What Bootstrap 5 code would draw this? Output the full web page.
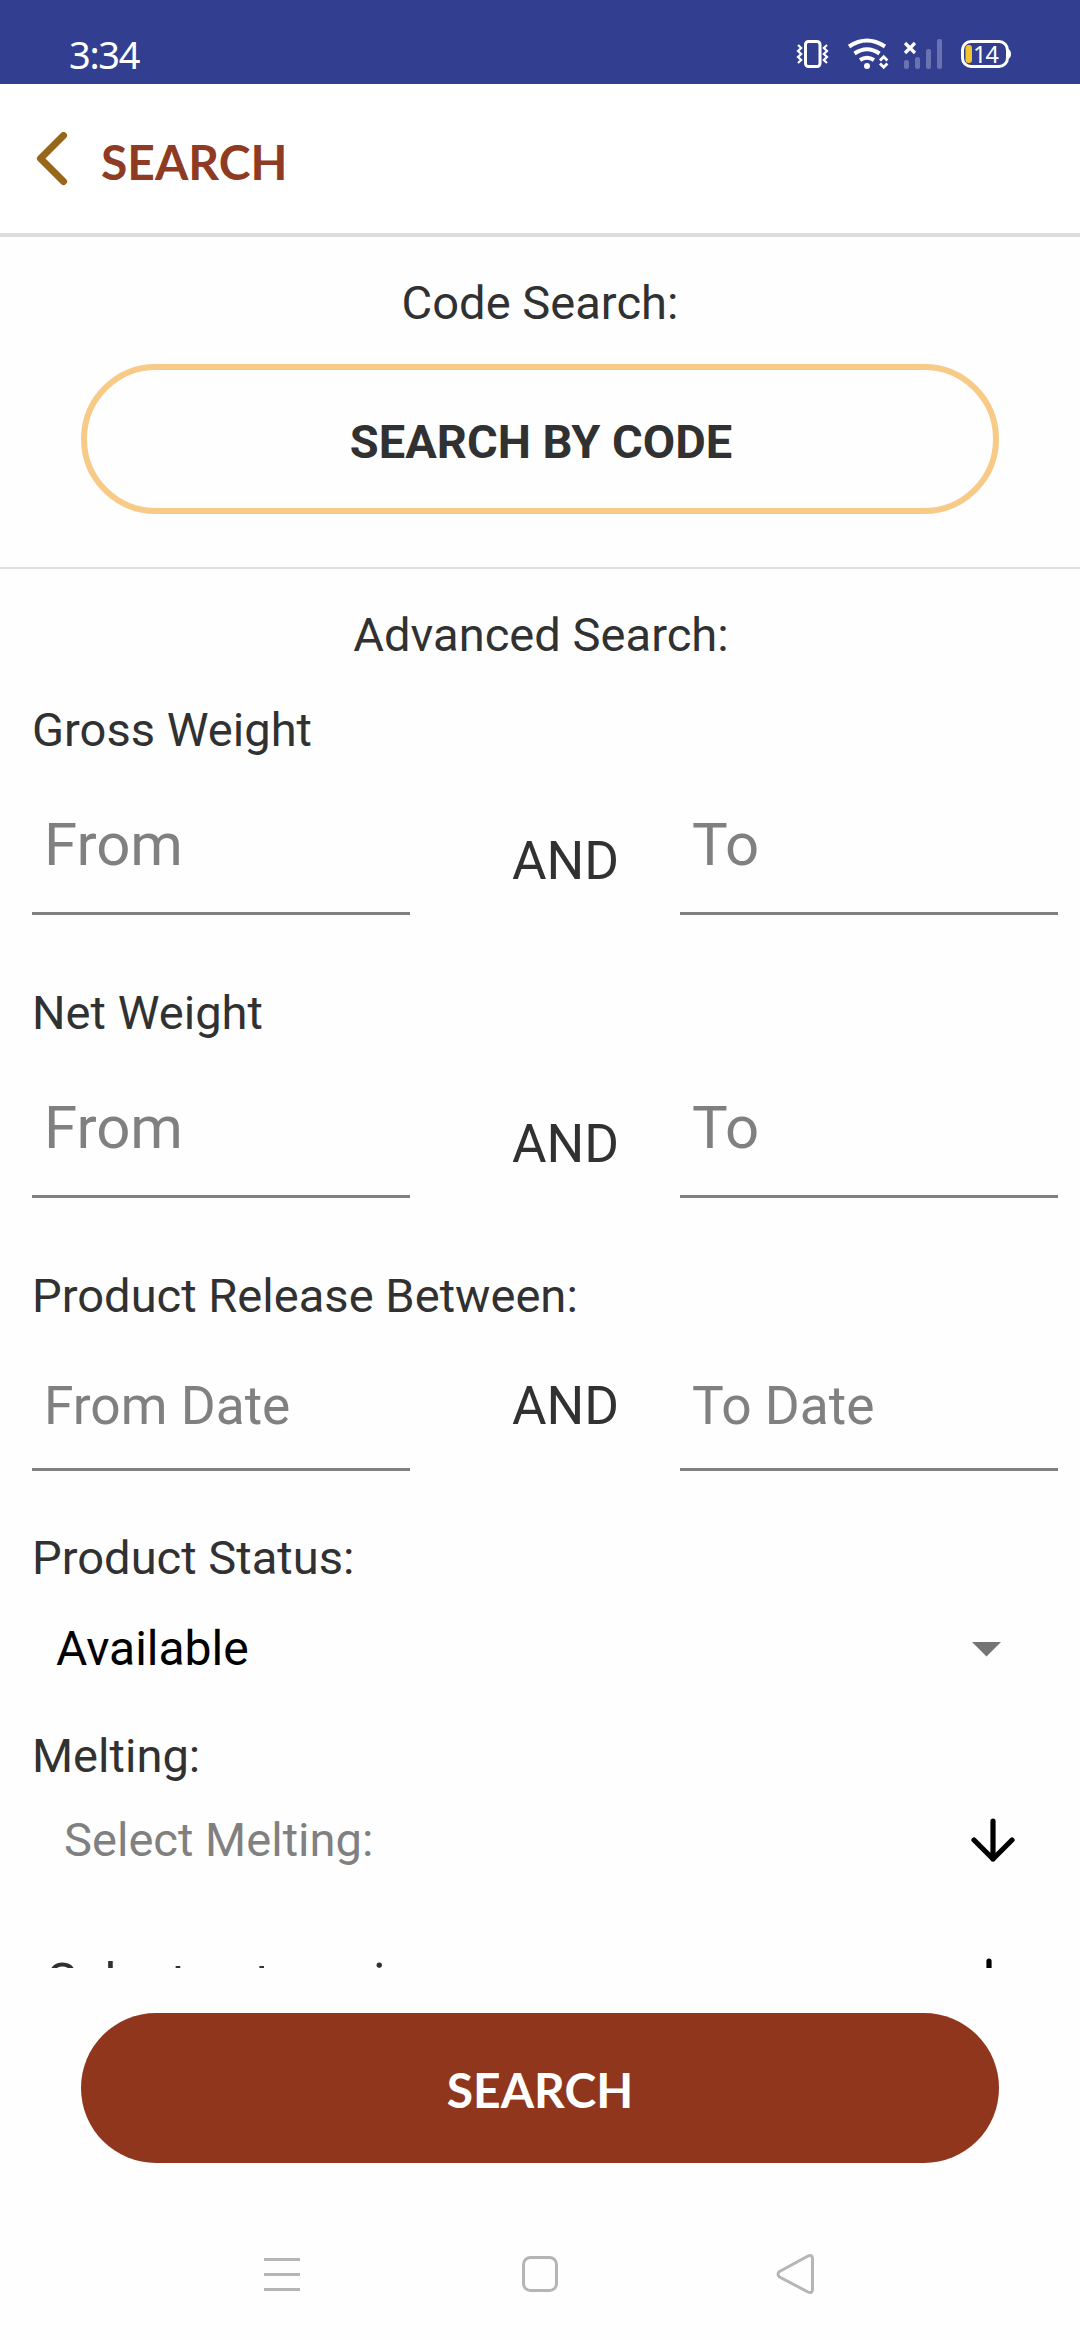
<!DOCTYPE html>
<html lang="en">
<head>
<meta charset="utf-8">
<meta name="viewport" content="width=device-width, initial-scale=1">
<title>Search</title>
<link href="https://cdn.jsdelivr.net/npm/bootstrap@5.3.0/dist/css/bootstrap.min.css" rel="stylesheet">
<style>
html,body{height:100%}
body{font-family:Roboto,"Noto Sans",sans-serif;color:#313131;background:#fefefe;font-size:47.1px;line-height:60px;overflow:hidden}
.screen{width:1080px;height:2340px}
.statusbar{height:84px;background:#323f90;color:#fff;padding-left:69px}
.clock{font:38px/84px "Noto Sans",sans-serif;padding-top:12px;letter-spacing:-1.300px}
.topbar{height:153px;border-bottom:4px solid #ddd;background:#fff;padding-left:36px}
.brand-title{font:bold 48px/60px Lato,sans-serif;color:#8f3a23;margin:7px 0 0 33px}
.code-area{padding:36px 81px 53px;border-bottom:2px solid #ddd}
.btn-pill{--bs-btn-border-radius:75px;height:150px;width:100%;padding:0}
.btn-code{--bs-btn-border-color:#f7cb87;--bs-btn-border-width:6px;--bs-btn-color:#313131;font-size:47px;font-weight:700;margin-top:31px;padding:7px 0 0 2px}
.btn-go{--bs-btn-bg:#90361d;--bs-btn-color:#fff;--bs-btn-border-width:0;font:bold 48px/60px Lato,sans-serif;padding-top:4px}
.form-area{padding:36px 22px 0 32px;min-height:0}
.range{height:155px}
.range-date{height:145px}
.field{width:378px;border-bottom:3px solid #808080;color:#808080;padding:0 0 37px 12px;font-size:60px}
.joiner{font-size:53px;padding:0 0 24px 41px}
.range-date .field{font-size:53.300px;padding-bottom:32px}
.range-date .joiner{padding-bottom:35px}
.gap-a{margin-top:35px}.gap-b{margin-top:68px}.gap-c{margin-top:57px}.gap-d{margin-top:47px}
.status-select{margin-top:31px;padding:0 57.5px 0 24px;color:#000;font-size:48px}
.melting-select{margin-top:24px;padding:0 43px 0 32px;color:#808080}
.category-select{margin-top:83px;padding:0 47px 0 15px}
.category-select span{font-size:51px}
.footer-area{padding:45px 81px 0;height:195px}
.sysnav{height:177px;padding:0 264px}
svg{display:block;flex:none}
</style>
</head>
<body>
<div class="screen d-flex flex-column">
  <div class="statusbar d-flex justify-content-between flex-shrink-0">
    <div class="clock">3:34</div>
    <svg width="290" height="84" viewBox="790 0 290 84" fill="none" stroke="#fff">
      <rect x="805.5" y="41.500" width="14.500" height="25" rx="3" stroke-width="3"/>
      <path d="M798 45l3.200 3-3.200 3 3.200 3-3.200 3 3.200 3-3.200 3M827 45l-3.200 3 3.200 3-3.200 3 3.200 3-3.200 3 3.200 3" stroke-width="2.200"/>
      <path d="M849 46.500Q867 34.500 885 46.500M854.500 53.500Q867 45 879.500 53.500M860 60Q867 55.500 874 60" stroke-width="4"/>
      <circle cx="867" cy="66" r="3" fill="#fff" stroke="none"/>
      <path d="M880 60.500l3.700-3.700 3.700 3.700M880 63.500l3.700 3.700 3.700-3.700" stroke-width="2.800"/>
      <path d="M905 43l10 10M915 43l-10 10" stroke-width="3.200"/>
      <g fill="#6973af" stroke="none"><rect x="904" y="60" width="5" height="9" rx="2"/><rect x="915" y="57" width="5" height="12" rx="2"/><rect x="926" y="49" width="5" height="20" rx="2"/><rect x="937" y="39" width="5" height="30" rx="2"/></g>
      <rect x="962.500" y="41.500" width="45" height="25" rx="8.500" stroke-width="3"/>
      <path d="M1008 49q3 1 3 5t-3 5z" fill="#fff" stroke="none"/>
      <rect x="965.500" y="45" width="6.500" height="18" rx="3" fill="#f3c430" stroke="none"/>
      <text x="973" y="62.500" font-family="Noto Sans, sans-serif" font-size="23.500" fill="#fff" stroke="none" letter-spacing="-1">14</text>
    </svg>
  </div>

  <header class="topbar d-flex align-items-center flex-shrink-0">
    <svg width="32" height="54" viewBox="36 132 32 54" fill="none" stroke="#97661a" stroke-width="7" stroke-linecap="round" stroke-linejoin="round"><path d="M63.500 135.500L40.500 158.500L63.500 181.500"/></svg>
    <h1 class="brand-title">SEARCH</h1>
  </header>

  <section class="code-area text-center flex-shrink-0">
    <div>Code Search:</div>
    <button type="button" class="btn btn-pill btn-code">SEARCH BY CODE</button>
  </section>

  <main class="form-area flex-grow-1 overflow-hidden">
    <div class="text-center pe-2">Advanced Search:</div>

    <div class="gap-a">Gross Weight</div>
    <div class="range d-flex align-items-end justify-content-between">
      <div class="field">From</div><div class="joiner">AND</div><div class="field">To</div>
    </div>

    <div class="gap-b">Net Weight</div>
    <div class="range d-flex align-items-end justify-content-between">
      <div class="field">From</div><div class="joiner">AND</div><div class="field">To</div>
    </div>

    <div class="gap-b">Product Release Between:</div>
    <div class="range range-date d-flex align-items-end justify-content-between">
      <div class="field">From Date</div><div class="joiner">AND</div><div class="field">To Date</div>
    </div>

    <div class="gap-c">Product Status:</div>
    <div class="status-select d-flex align-items-center justify-content-between">
      <span>Available</span>
      <svg width="29" height="15" viewBox="0 0 29 15"><path d="M0 0H29L14.500 14.500z" fill="#757575"/></svg>
    </div>

    <div class="gap-d">Melting:</div>
    <div class="melting-select d-flex align-items-center justify-content-between">
      <span>Select Melting:</span>
      <svg width="44" height="44" viewBox="0 0 44 44" fill="none" stroke="#000" stroke-width="5.200" stroke-linecap="round" stroke-linejoin="round"><path d="M22 3V41M3 22L22 41L41 22"/></svg>
    </div>

    <div class="category-select d-flex align-items-start justify-content-between">
      <span>Select categories</span>
      <svg class="mt-1" width="44" height="44" viewBox="0 -1 44 44" fill="none" stroke="#000" stroke-width="5.200" stroke-linecap="round" stroke-linejoin="round"><path d="M22 3V41M3 22L22 41L41 22"/></svg>
    </div>
  </main>

  <div class="footer-area flex-shrink-0">
    <button type="button" class="btn btn-pill btn-go">SEARCH</button>
  </div>

  <nav class="sysnav d-flex align-items-start justify-content-between flex-shrink-0">
    <svg width="552" height="177" viewBox="264 2163 552 177" fill="none" stroke="#b5b5b5" stroke-width="3" stroke-linejoin="round">
      <path d="M264 2259.500h36M264 2274.500h36M264 2289.500h36"/>
      <rect x="523.500" y="2257.500" width="33" height="33" rx="7"/>
      <path d="M779.500 2271.500L808 2256Q812.500 2254 812.500 2259V2289Q812.500 2294 808 2292L779.500 2277Q776.500 2274 779.500 2271.500z"/>
    </svg>
  </nav>
</div>
<script src="https://cdn.jsdelivr.net/npm/bootstrap@5.3.0/dist/js/bootstrap.bundle.min.js"></script>
</body>
</html>
